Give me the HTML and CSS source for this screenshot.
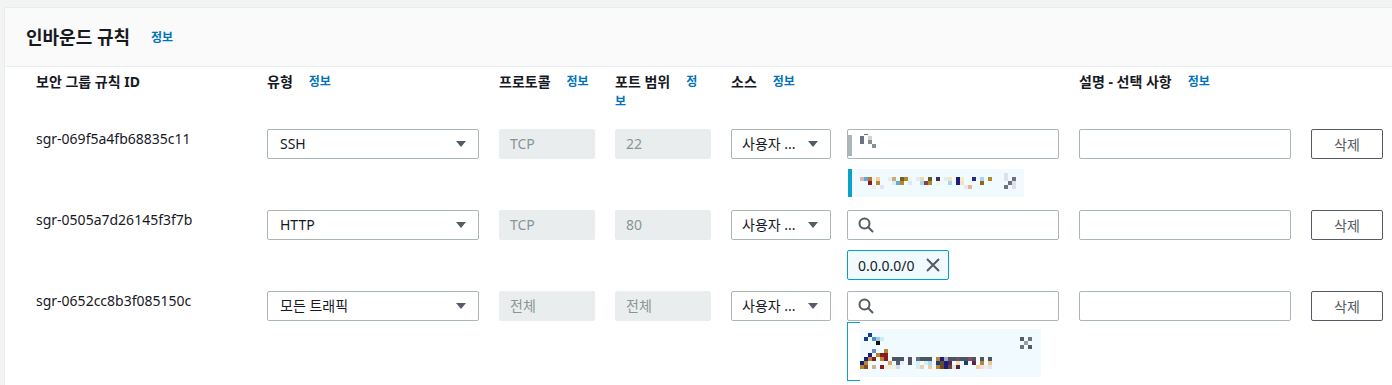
FILE: index.html
```html
<!DOCTYPE html>
<html lang="ko">

<head>
    <meta charset="UTF-8">
    <meta name="viewport" content="width=device-width, initial-scale=1.0">
    <title>인바운드 규칙</title>
    <link rel="stylesheet" href="styles.css">
</head>

<body>
    <div class="panel">
        <!-- Panel header -->
        <div class="panel-header">
            <h2>인바운드 규칙</h2>
            <a class="info" href="#">정보</a>
        </div>

        <!-- Column headers -->
        <div class="rule-row rule-head">
            <div class="cell">보안 그룹 규칙 ID</div>
            <div class="cell">유형<a class="info" href="#">정보</a></div>
            <div class="cell">프로토콜<a class="info" href="#">정보</a></div>
            <div class="cell cell-narrow">포트 범위<a class="info" href="#">정보</a></div>
            <div class="cell">소스<a class="info" href="#">정보</a></div>
            <div class="cell"></div>
            <div class="cell">설명 - 선택 사항<a class="info" href="#">정보</a></div>
            <div class="cell"></div>
        </div>

        <!-- Rule 1 -->
        <div class="rule-row rule">
            <div class="rule-id">sgr-069f5a4fb68835c11</div>
            <div class="select w-type"><span>SSH</span><svg class="caret" width="10" height="6" viewBox="0 0 10 6"><path d="M0 0h10L5 6z" /></svg></div>
            <div class="field field-disabled">TCP</div>
            <div class="field field-disabled">22</div>
            <div class="select w-source"><span>사용자 ...</span><svg class="caret" width="10" height="6" viewBox="0 0 10 6"><path d="M0 0h10L5 6z" /></svg></div>
            <div class="source-cell">
                <div class="field search">
                    <svg class="redacted-input" width="30" height="30" viewBox="0 0 30 30" shape-rendering="crispEdges">
                        <rect x="0" y="6" width="4" height="21" fill="#aab7b8" />
                        <rect x="12" y="7" width="4" height="8" fill="#6b7280" />
                        <rect x="16" y="5" width="4" height="1" fill="#6b7280" />
                        <rect x="20" y="7" width="4" height="4" fill="#cfd3d6" />
                        <rect x="20" y="11" width="4" height="4" fill="#8a8f96" />
                        <rect x="24" y="15" width="4" height="4" fill="#8a8f96" />
                    </svg>
                </div>
                <div class="token token-bar">
                    <svg width="172" height="28" viewBox="4 0 172 28" shape-rendering="crispEdges">
                        <rect x="12" y="8" width="4" height="4" fill="#d9b8b0" />
                        <rect x="16" y="8" width="4" height="4" fill="#5aa8e6" />
                        <rect x="20" y="8" width="4" height="4" fill="#b27a2a" />
                        <rect x="24" y="8" width="4" height="4" fill="#f3f3ee" />
                        <rect x="28" y="8" width="4" height="4" fill="#f2d3a0" />
                        <rect x="40" y="8" width="4" height="4" fill="#e8eaf5" />
                        <rect x="44" y="8" width="4" height="4" fill="#d6a870" />
                        <rect x="52" y="8" width="4" height="4" fill="#6a6420" />
                        <rect x="56" y="8" width="4" height="4" fill="#b8862a" />
                        <rect x="60" y="8" width="4" height="4" fill="#eef6e6" />
                        <rect x="68" y="8" width="4" height="4" fill="#e6e9f5" />
                        <rect x="72" y="8" width="4" height="4" fill="#f0d8a8" />
                        <rect x="80" y="8" width="4" height="4" fill="#5e5e20" />
                        <rect x="88" y="8" width="4" height="4" fill="#3c2e6c" />
                        <rect x="96" y="8" width="4" height="4" fill="#e8eaf5" />
                        <rect x="100" y="8" width="4" height="4" fill="#f5e6b4" />
                        <rect x="108" y="8" width="4" height="4" fill="#1c1c80" />
                        <rect x="112" y="8" width="4" height="4" fill="#f2eec0" />
                        <rect x="124" y="8" width="4" height="4" fill="#232a8c" />
                        <rect x="132" y="8" width="4" height="4" fill="#a0d8f5" />
                        <rect x="140" y="8" width="4" height="4" fill="#b8862a" />
                        <rect x="156" y="4" width="4" height="8" fill="#dde2ea" />
                        <rect x="164" y="8" width="4" height="4" fill="#6b7280" />
                        <rect x="20" y="12" width="4" height="4" fill="#8b1a1a" />
                        <rect x="28" y="12" width="4" height="4" fill="#b8862a" />
                        <rect x="44" y="12" width="4" height="4" fill="#d0f0fa" />
                        <rect x="48" y="12" width="4" height="4" fill="#6aa8d8" />
                        <rect x="52" y="12" width="4" height="4" fill="#b8862a" />
                        <rect x="60" y="12" width="4" height="4" fill="#d6ecfa" />
                        <rect x="72" y="12" width="4" height="4" fill="#a8d8f5" />
                        <rect x="76" y="12" width="4" height="4" fill="#8b4040" />
                        <rect x="80" y="12" width="4" height="4" fill="#b8862a" />
                        <rect x="88" y="12" width="4" height="4" fill="#eef6e6" />
                        <rect x="100" y="12" width="4" height="4" fill="#a0d8f5" />
                        <rect x="108" y="12" width="4" height="4" fill="#1c1c80" />
                        <rect x="112" y="12" width="4" height="4" fill="#f5e0c0" />
                        <rect x="132" y="12" width="4" height="4" fill="#a0601a" />
                        <rect x="160" y="12" width="4" height="4" fill="#6b7280" />
                        <rect x="164" y="12" width="4" height="4" fill="#dde2ea" />
                        <rect x="24" y="16" width="4" height="4" fill="#e8eef8" />
                        <rect x="32" y="16" width="4" height="4" fill="#e0e4f5" />
                        <rect x="116" y="16" width="4" height="4" fill="#e6e9f5" />
                        <rect x="120" y="16" width="4" height="4" fill="#e8b888" />
                        <rect x="156" y="16" width="4" height="4" fill="#6b7280" />
                        <rect x="164" y="16" width="4" height="4" fill="#dde2ea" />
                    </svg>
                </div>
            </div>
            <div class="field w-desc"></div>
            <button class="btn-delete">삭제</button>
        </div>

        <!-- Rule 2 -->
        <div class="rule-row rule">
            <div class="rule-id">sgr-0505a7d26145f3f7b</div>
            <div class="select w-type"><span>HTTP</span><svg class="caret" width="10" height="6" viewBox="0 0 10 6"><path d="M0 0h10L5 6z" /></svg></div>
            <div class="field field-disabled">TCP</div>
            <div class="field field-disabled">80</div>
            <div class="select w-source"><span>사용자 ...</span><svg class="caret" width="10" height="6" viewBox="0 0 10 6"><path d="M0 0h10L5 6z" /></svg></div>
            <div class="source-cell">
                <div class="field search">
                    <svg class="search-icon" width="16" height="16" viewBox="0 0 16 16"><circle cx="6.5" cy="6.5" r="5" /><path d="M10 10l4.5 4.5" /></svg>
                </div>
                <div class="token token-ip">
                    <span>0.0.0.0/0</span>
                    <svg class="dismiss" width="14" height="14" viewBox="0 0 14 14"><path d="M1 1l12 12M13 1L1 13" /></svg>
                </div>
            </div>
            <div class="field w-desc"></div>
            <button class="btn-delete">삭제</button>
        </div>

        <!-- Rule 3 -->
        <div class="rule-row rule">
            <div class="rule-id">sgr-0652cc8b3f085150c</div>
            <div class="select w-type"><span>모든 트래픽</span><svg class="caret" width="10" height="6" viewBox="0 0 10 6"><path d="M0 0h10L5 6z" /></svg></div>
            <div class="field field-disabled">전체</div>
            <div class="field field-disabled">전체</div>
            <div class="select w-source"><span>사용자 ...</span><svg class="caret" width="10" height="6" viewBox="0 0 10 6"><path d="M0 0h10L5 6z" /></svg></div>
            <div class="source-cell">
                <div class="field search">
                    <svg class="search-icon" width="16" height="16" viewBox="0 0 16 16"><circle cx="6.5" cy="6.5" r="5" /><path d="M10 10l4.5 4.5" /></svg>
                </div>
                <svg class="token-redacted" width="194" height="59" viewBox="0 0 194 59" shape-rendering="crispEdges">
                    <rect x="13" y="7" width="181" height="48" fill="#f1faff" />
                    <path d="M13 0.5H0.5V58.5H13" fill="none" stroke="#0aa2c9" />
                    <rect x="21" y="11" width="4" height="4" fill="#1a3a9a" />
                    <rect x="17" y="15" width="4" height="4" fill="#1a3a9a" />
                    <rect x="25" y="15" width="4" height="4" fill="#4a90d8" />
                    <rect x="29" y="15" width="4" height="4" fill="#a0c8e8" />
                    <rect x="33" y="15" width="4" height="4" fill="#c8f0fa" />
                    <rect x="29" y="19" width="4" height="4" fill="#111111" />
                    <rect x="25" y="27" width="4" height="4" fill="#6a8ac0" />
                    <rect x="37" y="27" width="4" height="4" fill="#b8862a" />
                    <rect x="21" y="31" width="4" height="4" fill="#1c1c80" />
                    <rect x="29" y="31" width="4" height="4" fill="#b8862a" />
                    <rect x="33" y="31" width="8" height="4" fill="#8b1a1a" />
                    <rect x="17" y="35" width="4" height="4" fill="#1c1c80" />
                    <rect x="21" y="35" width="4" height="4" fill="#b8862a" />
                    <rect x="25" y="35" width="4" height="4" fill="#8b1a1a" />
                    <rect x="33" y="35" width="4" height="4" fill="#b8862a" />
                    <rect x="37" y="35" width="4" height="4" fill="#8b1a1a" />
                    <rect x="45" y="35" width="12" height="4" fill="#4a5560" />
                    <rect x="61" y="35" width="4" height="4" fill="#5a5060" />
                    <rect x="69" y="35" width="4" height="4" fill="#607080" />
                    <rect x="73" y="35" width="12" height="4" fill="#4a5560" />
                    <rect x="89" y="35" width="4" height="4" fill="#b8862a" />
                    <rect x="93" y="35" width="4" height="4" fill="#1c1c80" />
                    <rect x="97" y="35" width="4" height="4" fill="#a0a0c0" />
                    <rect x="101" y="35" width="8" height="4" fill="#4a5560" />
                    <rect x="109" y="35" width="4" height="4" fill="#6a5070" />
                    <rect x="113" y="35" width="8" height="4" fill="#4a5560" />
                    <rect x="121" y="35" width="4" height="4" fill="#8b4a5a" />
                    <rect x="125" y="35" width="4" height="4" fill="#4a5560" />
                    <rect x="133" y="35" width="4" height="4" fill="#4a5560" />
                    <rect x="141" y="35" width="4" height="4" fill="#4a5560" />
                    <rect x="13" y="39" width="4" height="4" fill="#1c1c80" />
                    <rect x="17" y="39" width="4" height="4" fill="#b8862a" />
                    <rect x="41" y="39" width="4" height="4" fill="#d6a870" />
                    <rect x="49" y="39" width="4" height="4" fill="#4a6080" />
                    <rect x="53" y="39" width="4" height="4" fill="#e8eef8" />
                    <rect x="61" y="39" width="4" height="4" fill="#4a5560" />
                    <rect x="69" y="39" width="4" height="4" fill="#d0f0fa" />
                    <rect x="77" y="39" width="4" height="4" fill="#d0f0fa" />
                    <rect x="81" y="39" width="4" height="4" fill="#a8d8f5" />
                    <rect x="89" y="39" width="4" height="4" fill="#1c3a8a" />
                    <rect x="93" y="39" width="4" height="4" fill="#6a4a20" />
                    <rect x="97" y="39" width="4" height="4" fill="#1c1c80" />
                    <rect x="101" y="39" width="4" height="4" fill="#5a2060" />
                    <rect x="109" y="39" width="4" height="4" fill="#f0e0b0" />
                    <rect x="117" y="39" width="4" height="4" fill="#1c3a8a" />
                    <rect x="125" y="39" width="4" height="4" fill="#6a2040" />
                    <rect x="133" y="39" width="4" height="4" fill="#b8862a" />
                    <rect x="141" y="39" width="4" height="4" fill="#e8c890" />
                    <rect x="13" y="43" width="4" height="4" fill="#b8862a" />
                    <rect x="17" y="43" width="4" height="4" fill="#8b4a20" />
                    <rect x="25" y="43" width="4" height="4" fill="#d0b090" />
                    <rect x="33" y="43" width="4" height="4" fill="#8b1a1a" />
                    <rect x="37" y="43" width="12" height="4" fill="#f0f0e0" />
                    <rect x="49" y="43" width="4" height="4" fill="#e0d8e8" />
                    <rect x="69" y="43" width="4" height="4" fill="#d0f0fa" />
                    <rect x="73" y="43" width="4" height="4" fill="#f0d0a0" />
                    <rect x="81" y="43" width="4" height="4" fill="#f0d0a0" />
                    <rect x="89" y="43" width="4" height="4" fill="#b8862a" />
                    <rect x="93" y="43" width="4" height="4" fill="#6a4a20" />
                    <rect x="97" y="43" width="4" height="4" fill="#1c1c80" />
                    <rect x="101" y="43" width="4" height="4" fill="#6a4a20" />
                    <rect x="105" y="43" width="4" height="4" fill="#e0e0f0" />
                    <rect x="109" y="43" width="4" height="4" fill="#5a2040" />
                    <rect x="129" y="43" width="4" height="4" fill="#f0d0a0" />
                    <rect x="133" y="43" width="4" height="4" fill="#e8e0f0" />
                    <rect x="137" y="43" width="4" height="4" fill="#f0f0e0" />
                    <rect x="141" y="43" width="4" height="4" fill="#e0e4f0" />
                    <rect x="173" y="15" width="4" height="4" fill="#555b64" />
                    <rect x="181" y="15" width="4" height="4" fill="#6b7280" />
                    <rect x="177" y="19" width="4" height="4" fill="#9aa0a8" />
                    <rect x="173" y="23" width="4" height="4" fill="#6b7280" />
                    <rect x="181" y="23" width="4" height="4" fill="#555b64" />
                </svg>
            </div>
            <div class="field w-desc"></div>
            <button class="btn-delete">삭제</button>
        </div>
    </div>
</body>

</html>
```

FILE: styles.css
```css
body {
    font-family: "Noto Sans", "Noto Sans CJK KR", sans-serif;
    font-size: 14px;
    margin: 0;
    padding: 0;
    background-color: #f2f3f3;
    color: #16191f;
    overflow: hidden;
}

.panel {
    margin: 7px 0 0 4px;
    height: 400px;
    background: #fff;
    border-top: 1px solid #eaeded;
    border-left: 1px solid #eaeded;
}

.panel-header {
    display: flex;
    align-items: center;
    height: 58px;
    padding-left: 21px;
    background-color: #fafafa;
    border-bottom: 1px solid #eaeded;
}

.panel-header h2 {
    margin: 0;
    font-size: 18px;
    font-weight: 700;
    line-height: 22px;
}

.info {
    color: #0073bb;
    font-size: 12px;
    font-weight: 700;
    text-decoration: none;
}

.panel-header .info {
    margin-left: 21px;
}

.rule-row {
    display: grid;
    grid-template-columns: 231px 232px 116px 116px 116px 232px 232px 72px;
    align-items: start;
    padding-left: 31px;
}

.rule-head {
    padding: 5px 0 17px 31px;
    font-weight: 700;
    line-height: 20px;
}

.rule-head .cell {
    padding-right: 20px;
}

.rule-head .cell-narrow {
    padding-right: 28px;
}

.rule-head .info {
    margin-left: 16px;
    line-height: 20px;
    vertical-align: top;
}

.rule {
    height: 81px;
}

.rule-id {
    line-height: 20px;
}

.field,
.select {
    box-sizing: border-box;
    height: 30px;
    border: 1px solid #aab7b8;
    border-radius: 2px;
    background: #fff;
    display: flex;
    align-items: center;
    line-height: 20px;
}

.select {
    justify-content: space-between;
    padding: 0 12px;
}

.caret {
    fill: #545b64;
}

.w-type {
    width: 212px;
}

.w-source {
    width: 100px;
    padding: 0 12px 0 10px;
}

.w-desc {
    width: 212px;
}

.field-disabled {
    width: 96px;
    padding-left: 10px;
    background: #eaeded;
    border-color: #eaeded;
    color: #879596;
}

.search {
    width: 212px;
    padding-left: 10px;
}

.search-icon {
    fill: none;
    stroke: #545b64;
    stroke-width: 2;
    stroke-linecap: round;
}

.redacted-input {
    margin-left: -10px;
}

.token {
    box-sizing: border-box;
    margin-top: 10px;
}

.token-bar {
    display: flex;
    align-items: center;
    width: 176px;
    height: 28px;
    margin-left: 1px;
    background: #f1faff;
    border-left: 4px solid #0aa2c9;
}

.token-ip {
    display: inline-flex;
    align-items: center;
    gap: 11px;
    height: 30px;
    padding: 0 8px 0 10px;
    background: #f1faff;
    border: 1px solid #00a1c9;
    border-radius: 2px;
}

.dismiss {
    fill: none;
    stroke: #545b64;
    stroke-width: 2;
}

.token-redacted {
    display: block;
    margin-top: 1px;
}

.btn-delete {
    box-sizing: border-box;
    width: 72px;
    height: 30px;
    padding: 0;
    border: 1px solid #545b64;
    border-radius: 2px;
    background: #fff;
    color: #545b64;
    font-family: inherit;
    font-size: 14px;
    cursor: pointer;
}
```
